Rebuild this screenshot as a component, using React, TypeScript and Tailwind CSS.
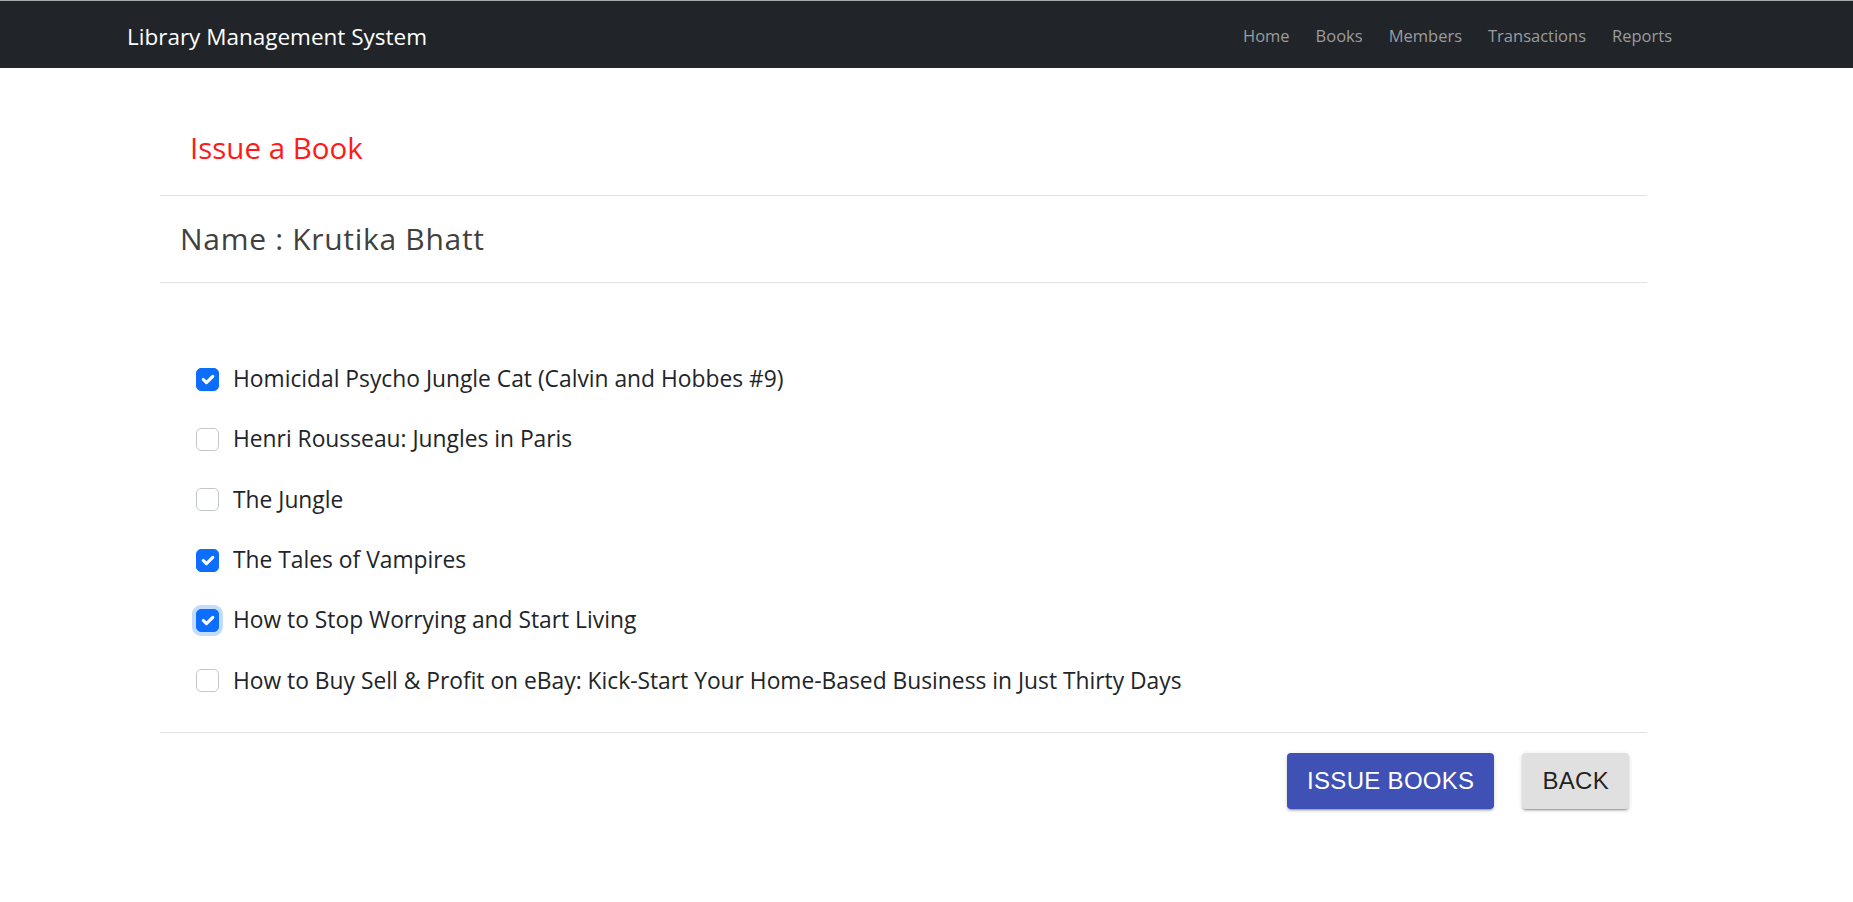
import React, { useState } from "react";

// books offered for issue, with their initial checked state
const books = [
  { title: "Homicidal Psycho Jungle Cat (Calvin and Hobbes #9)", checked: true },
  { title: "Henri Rousseau: Jungles in Paris", checked: false },
  { title: "The Jungle", checked: false },
  { title: "The Tales of Vampires", checked: true },
  { title: "How to Stop Worrying and Start Living", checked: true, focused: true },
  { title: "How to Buy Sell & Profit on eBay: Kick-Start Your Home-Based Business in Just Thirty Days", checked: false },
];

const navLinks = ["Home", "Books", "Members", "Transactions", "Reports"];

function CheckBox({ checked, focused, onClick }: { checked: boolean; focused?: boolean; onClick: () => void }) {
  return (
    <span
      onClick={onClick}
      className={
        "flex h-[23px] w-[23px] shrink-0 cursor-pointer items-center justify-center rounded-[5px] border " +
        (checked ? "border-[#0d6efd] bg-[#0d6efd] " : "border-[#c4c7ca] bg-white ") +
        (focused ? "shadow-[0_0_0_4px_#c2dbfe]" : "")
      }
    >
      {checked && (
        <svg viewBox="0 0 20 20" className="h-[23px] w-[23px]">
          <path d="m6 10 3 3 6-6" fill="none" stroke="#fff" strokeWidth="3" strokeLinecap="round" strokeLinejoin="round" />
        </svg>
      )}
    </span>
  );
}

function App() {
  const [state, setState] = useState(books.map((b) => b.checked));

  return (
    <div className="min-h-[902px] bg-white font-['Open_Sans',sans-serif]">
      {/* top navbar */}
      <div className="h-px bg-[#a9a9a9]" />
      <nav className="flex h-[67px] items-center justify-between bg-[#212529] pl-[127px] pr-[181px] pt-[4px]">
        <span className="text-[22.5px] text-white">Library Management System</span>
        <ul className="flex gap-[26px] text-[16.5px] text-[#9a9c9f]">
          {navLinks.map((l) => (
            <li key={l}>{l}</li>
          ))}
        </ul>
      </nav>

      <div className="ml-[160px] w-[1487px]">
        <h3 className="pb-[28px] pl-[30px] pt-[61px] text-[29.5px] leading-[38px] text-[#ff1a1a]">Issue a Book</h3>

        <div className="border-y border-[#dee2e6] py-[24px] pl-[20px] text-[30px] leading-[38px] tracking-[0.7px] text-[#404040]">
          Name : Krutika Bhatt
        </div>

        <ul className="pb-[21px] pt-[66px]">
          {books.map((b, i) => (
            <li key={b.title} className="flex h-[60.3px] items-center gap-[14px] pl-[36px] text-[22.8px] text-[#212529]">
              <CheckBox
                checked={state[i]}
                focused={b.focused}
                onClick={() => setState((s) => s.map((v, j) => (j === i ? !v : v)))}
              />
              <span>{b.title}</span>
            </li>
          ))}
        </ul>

        <div className="flex justify-end gap-[28px] border-t border-[#dee2e6] pr-[18px] pt-[20px] font-['Liberation_Sans',Arial,sans-serif]">
          <button className="h-[56px] rounded-[4px] bg-[#3f51b5] px-[20px] text-[24px] tracking-[0.3px] text-white shadow-[0_3px_1px_-2px_rgba(0,0,0,0.2),0_2px_2px_0_rgba(0,0,0,0.14),0_1px_5px_0_rgba(0,0,0,0.12)]">
            ISSUE BOOKS
          </button>
          <button className="h-[56px] rounded-[4px] bg-[#e0e0e0] px-[20px] text-[24px] tracking-[0.3px] text-[rgba(0,0,0,0.87)] shadow-[0_3px_1px_-2px_rgba(0,0,0,0.2),0_2px_2px_0_rgba(0,0,0,0.14),0_1px_5px_0_rgba(0,0,0,0.12)]">
            BACK
          </button>
        </div>
      </div>
    </div>
  );
}

export default App;
